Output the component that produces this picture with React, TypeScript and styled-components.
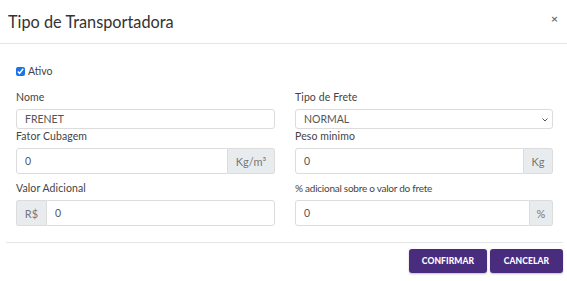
import React from 'react';
import styled, { createGlobalStyle } from 'styled-components';

const Global = createGlobalStyle`
    body {
        margin: 0;
        background: #fff;
        font-family: Lato, "Open Sans", sans-serif;
        color: #444;
    }
`;

const Modal = styled.div`
    width: 567px;
    height: 281px;
    background: #fff;
`;

const Header = styled.div`
    height: 42px;
    padding: 0 8px 1px;
    border-bottom: 1px solid #e6e6e6;
    display: flex;
    align-items: center;
    justify-content: space-between;
`;

const Title = styled.h4`
    margin: 0;
    font-size: 16.3px;
    font-weight: 400;
    color: #333;
`;

const Close = styled.span`
    font-size: 12px;
    font-weight: 700;
    color: #6f6f6f;
    margin-right: 1px;
    margin-top: -6px;
`;

const Body = styled.div`
    padding: 20px 14px 0 16px;
`;

const CheckRow = styled.label`
    display: flex;
    align-items: center;
    gap: 3px;
    font-size: 10.5px;
    color: #444;
    height: 14px;
    margin-bottom: 12px;
`;

const Check = styled.input`
    width: 9px;
    height: 9px;
    margin: 0;
    accent-color: #1a73e8;
`;

const Grid = styled.div`
    display: grid;
    grid-template-columns: 259px 258px;
    column-gap: 20px;
`;

const Field = styled.div<{ $gap?: number }>`
    display: flex;
    flex-direction: column;
    margin-bottom: ${p => p.$gap ?? 0}px;
`;

const Label = styled.label<{ $tight?: boolean }>`
    font-size: ${p => (p.$tight ? 10 : 10.5)}px;
    letter-spacing: ${p => (p.$tight ? -0.25 : 0.1)}px;
    line-height: 14px;
    color: #444;
    margin-bottom: 5px;
`;

const Input = styled.input`
    display: block;
    box-sizing: border-box;
    width: 100%;
    height: 20px;
    border: 1px solid #dcdcdc;
    border-radius: 3px;
    padding: 0 8px;
    font-family: inherit;
    font-size: 10.5px;
    color: #555;
    outline: none;
    min-width: 0;
`;

const SelectWrap = styled.div`
    position: relative;
    height: 20px;
`;

const Select = styled.select`
    display: block;
    box-sizing: border-box;
    width: 100%;
    height: 20px;
    border: 1px solid #dcdcdc;
    border-radius: 3px;
    padding: 0 8px;
    font-family: inherit;
    font-size: 10.5px;
    color: #555;
    background: #fff;
    appearance: none;
    outline: none;
`;

const Chevron = styled.svg`
    position: absolute;
    right: 5px;
    top: 9px;
    pointer-events: none;
`;

const Group = styled.div`
    display: flex;
    height: 26px;
`;

const GroupInput = styled(Input)<{ $side: 'left' | 'right' }>`
    flex: 1;
    height: 26px;
    border-radius: ${p => (p.$side === 'right' ? '3px 0 0 3px' : '0 3px 3px 0')};
`;

const Addon = styled.span<{ $w: number; $side: 'left' | 'right' }>`
    box-sizing: border-box;
    width: ${p => p.$w}px;
    display: flex;
    align-items: center;
    justify-content: center;
    background: #e9ecef;
    border: 1px solid #dcdcdc;
    ${p => (p.$side === 'right' ? 'border-left: none;' : 'border-right: none;')}
    border-radius: ${p => (p.$side === 'right' ? '0 3px 3px 0' : '3px 0 0 3px')};
    font-size: 11px;
    color: #777;
`;

const Footer = styled.div`
    margin: 16px 4px 0 6px;
    border-top: 1px solid #e6e6e6;
    padding-top: 6px;
    display: flex;
    justify-content: flex-end;
    gap: 3px;
`;

const Button = styled.button<{ $w: number }>`
    width: ${p => p.$w}px;
    height: 24px;
    border: none;
    border-radius: 3px;
    background: #4a2c7e;
    color: #fff;
    font-family: inherit;
    font-weight: 900;
    font-size: 8.5px;
    letter-spacing: 0.1px;
    box-shadow: 0 1px 2px rgba(0, 0, 0, 0.25);
`;

const InputGroup = ({ addon, side, w, value }: { addon: string; side: 'left' | 'right'; w: number; value: string }) => (
    <Group>
        {side === 'left' && <Addon $w={w} $side="left">{addon}</Addon>}
        <GroupInput $side={side} defaultValue={value} />
        {side === 'right' && <Addon $w={w} $side="right">{addon}</Addon>}
    </Group>
);

export default function App() {
    return (
        <Modal>
            <Global />
            <Header>
                <Title>Tipo de Transportadora</Title>
                <Close>×</Close>
            </Header>
            <Body>
                <CheckRow>
                    <Check type="checkbox" defaultChecked />
                    Ativo
                </CheckRow>
                <Grid>
                    <Field>
                        <Label>Nome</Label>
                        <Input defaultValue="FRENET" />
                    </Field>
                    <Field>
                        <Label>Tipo de Frete</Label>
                        <SelectWrap>
                            <Select defaultValue="NORMAL">
                                <option>NORMAL</option>
                            </Select>
                            <Chevron width="6" height="4" viewBox="0 0 6 4">
                                <path d="M0.5 0.5 L3 3 L5.5 0.5" fill="none" stroke="#555" strokeWidth="1" />
                            </Chevron>
                        </SelectWrap>
                    </Field>
                    <Field $gap={7}>
                        <Label>Fator Cubagem</Label>
                        <InputGroup addon="Kg/m³" side="right" w={47} value="0" />
                    </Field>
                    <Field $gap={7}>
                        <Label>Peso minimo</Label>
                        <InputGroup addon="Kg" side="right" w={29} value="0" />
                    </Field>
                    <Field>
                        <Label>Valor Adicional</Label>
                        <InputGroup addon="R$" side="left" w={30} value="0" />
                    </Field>
                    <Field>
                        <Label $tight>% adicional sobre o valor do frete</Label>
                        <InputGroup addon="%" side="right" w={23} value="0" />
                    </Field>
                </Grid>
            </Body>
            <Footer>
                <Button $w={78}>CONFIRMAR</Button>
                <Button $w={73}>CANCELAR</Button>
            </Footer>
        </Modal>
    );
}
